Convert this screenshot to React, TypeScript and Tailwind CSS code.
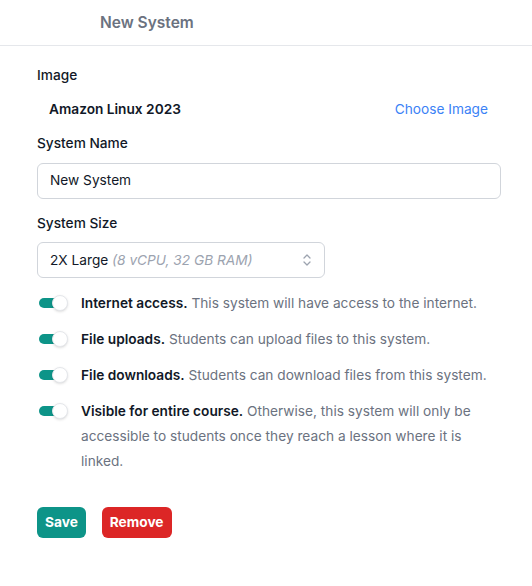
import React from "react";

function Toggle() {
  return (
    <span className="relative ml-[1px] mt-[4px] inline-flex h-4 w-[30px] shrink-0 items-center">
      <span className="mx-auto h-[10px] w-[28px] rounded-full bg-[#0d9488]" />
      <span className="absolute right-0 top-0 h-4 w-4 rounded-full border border-gray-200 bg-white shadow-sm" />
    </span>
  );
}

function Option({ title, text }: { title: string; text: string }) {
  return (
    <div className="flex items-start gap-[13px]">
      <Toggle />
      <p className="text-[13.7px] leading-[25px] text-[#6b7280]">
        <span className="font-semibold text-[#111827]">{title}</span> {text}
      </p>
    </div>
  );
}

export default function App() {
  return (
    <div className="min-h-[586px] w-[532px] bg-white font-['Inter',sans-serif] text-[13.7px]">
      <div className="flex h-[46px] items-center border-b border-[#e5e7eb] pl-[100px]">
        <h1 className="text-[15.5px] font-semibold text-[#6b7280]">New System</h1>
      </div>

      <div className="px-[37px] pt-[19px]">
        <div className="mr-[5px]">
          <label className="block font-medium text-[#111827]">Image</label>
          <div className="mt-[13px] flex items-center justify-between pl-3 pr-[2px]">
            <span className="font-semibold text-[#111827]">Amazon Linux 2023</span>
            <button className="text-[#3b82f6]">Choose Image</button>
          </div>
        </div>

        <label className="mt-[14px] block font-medium text-[#111827]">System Name</label>
        <div className="mt-[9px] flex h-[36px] w-[464px] items-center rounded-md border border-[#d1d5db] px-3 text-[#111827]">
          New System
        </div>

        <label className="mt-[14px] block font-medium text-[#111827]">System Size</label>
        <div className="mt-[9px] flex h-[36px] w-[288px] items-center justify-between rounded-md border border-[#d1d5db] pl-3 pr-[11px] text-[#111827]">
          <span>
            2X Large <span className="italic text-[#9ca3af]">(8 vCPU, 32 GB RAM)</span>
          </span>
          <svg width="12" height="16" viewBox="0 0 12 16" fill="none" stroke="#9ca3af" strokeWidth="1.3" strokeLinecap="round" strokeLinejoin="round">
            <path d="M3 6l3-3 3 3" />
            <path d="M3 10l3 3 3-3" />
          </svg>
        </div>

        <div className="mt-[13px] flex flex-col gap-[11px]">
          <Option title="Internet access." text="This system will have access to the internet." />
          <Option title="File uploads." text="Students can upload files to this system." />
          <Option title="File downloads." text="Students can download files from this system." />
          <Option
            title="Visible for entire course."
            text="Otherwise, this system will only be accessible to students once they reach a lesson where it is linked."
          />
        </div>

        <div className="mt-[33px] flex gap-4">
          <button className="h-[31px] rounded-md bg-[#0d9488] px-2 font-bold text-white">Save</button>
          <button className="h-[31px] rounded-md bg-[#dc2626] px-2 font-bold text-white">Remove</button>
        </div>
      </div>
    </div>
  );
}
